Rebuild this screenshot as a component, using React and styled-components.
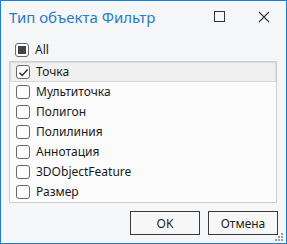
import styled, { createGlobalStyle } from "styled-components";

const GlobalStyle = createGlobalStyle`
  html, body {
    margin: 0;
    padding: 0;
    background: #f5f6f7;
  }
  * {
    box-sizing: border-box;
  }
`;

const items = [
  { label: "Точка", checked: true },
  { label: "Мультиточка" },
  { label: "Полигон" },
  { label: "Полилиния" },
  { label: "Аннотация" },
  { label: "3DObjectFeature" },
  { label: "Размер" },
];

function Box({ state }) {
  return (
    <CheckBox>
      {state === "checked" && (
        <svg width="11" height="11" viewBox="0 0 11 11">
          <path d="M1.5 5.8 L4.2 8.4 L9.6 2.4" fill="none" stroke="#333" strokeWidth="1.5" />
        </svg>
      )}
      {state === "mixed" && <Mixed />}
    </CheckBox>
  );
}

function App() {
  return (
    <>
      <GlobalStyle />
      <Window>
        <TitleBar>
          <Title>Тип объекта Фильтр</Title>
          <Controls>
            <svg width="12" height="12" viewBox="0 0 12 12">
              <rect x="0.5" y="0.5" width="10" height="10" fill="none" stroke="#333" strokeWidth="1" />
            </svg>
            <svg width="12" height="12" viewBox="0 0 12 12">
              <path d="M1 1 L11 11 M11 1 L1 11" stroke="#333" strokeWidth="1.1" />
            </svg>
          </Controls>
        </TitleBar>

        <AllRow>
          <Box state="mixed" />
          <Label>All</Label>
        </AllRow>

        <List>
          {items.map((item) => (
            <Row key={item.label} selected={item.checked}>
              <Box state={item.checked ? "checked" : "none"} />
              <Label>{item.label}</Label>
            </Row>
          ))}
        </List>

        <Footer>
          <Button>OK</Button>
          <Button>Отмена</Button>
        </Footer>

        <Grip width="10" height="10" viewBox="0 0 10 10">
          <rect x="7" y="1" width="2" height="2" fill="#9a9a9a" />
          <rect x="4" y="4" width="2" height="2" fill="#9a9a9a" />
          <rect x="7" y="4" width="2" height="2" fill="#9a9a9a" />
          <rect x="1" y="7" width="2" height="2" fill="#9a9a9a" />
          <rect x="4" y="7" width="2" height="2" fill="#9a9a9a" />
          <rect x="7" y="7" width="2" height="2" fill="#9a9a9a" />
        </Grip>
      </Window>
    </>
  );
}

const Window = styled.div`
  position: relative;
  width: 287px;
  height: 244px;
  border: 1px solid #1b7cd3;
  background: #f5f6f7;
  display: flex;
  flex-direction: column;
  font-family: "Noto Sans", "Open Sans", sans-serif;
  color: #1a1a1a;
`;

const TitleBar = styled.div`
  height: 33px;
  display: flex;
  align-items: center;
  justify-content: space-between;
  padding: 0 16px 0 8px;
`;

const Title = styled.div`
  font-size: 15px;
  color: #2b7cc7;
  margin-top: -1px;
`;

const Controls = styled.div`
  display: flex;
  align-items: center;
  gap: 32px;
  margin-top: -2px;
`;

const AllRow = styled.div`
  height: 20px;
  margin-top: 6px;
  display: flex;
  align-items: center;
  padding-left: 14px;
  gap: 6px;
`;

const List = styled.div`
  margin: 1px 9px 0 8px;
  border: 1px solid #cfcfcf;
  background: #fbfbfb;
  height: 142px;
  display: flex;
  flex-direction: column;
`;

const Row = styled.div`
  height: 20px;
  display: flex;
  align-items: center;
  gap: 6px;
  padding-left: 5px;
  background: ${(p) => (p.selected ? "#f0f0f0" : "transparent")};
  border: 1px solid ${(p) => (p.selected ? "#dadada" : "transparent")};
`;

const CheckBox = styled.span`
  width: 14px;
  height: 14px;
  border: 1px solid #6a6a6a;
  border-radius: 3px;
  background: #fdfdfd;
  display: flex;
  align-items: center;
  justify-content: center;
  flex-shrink: 0;
`;

const Mixed = styled.span`
  width: 8px;
  height: 8px;
  background: #444;
`;

const Label = styled.span`
  font-size: 12px;
  line-height: 16px;
`;

const Footer = styled.div`
  display: flex;
  justify-content: flex-end;
  gap: 8px;
  padding: 8px 8px 0 0;
`;

const Button = styled.button`
  width: 70px;
  height: 24px;
  border: 1px solid #3a3a3a;
  background: #f7f7f7;
  font-family: "Noto Sans", "Open Sans", sans-serif;
  font-size: 12px;
  color: #1e1e1e;
  padding: 0;
`;

const Grip = styled.svg`
  position: absolute;
  right: 2px;
  bottom: 1px;
`;

export default App;
